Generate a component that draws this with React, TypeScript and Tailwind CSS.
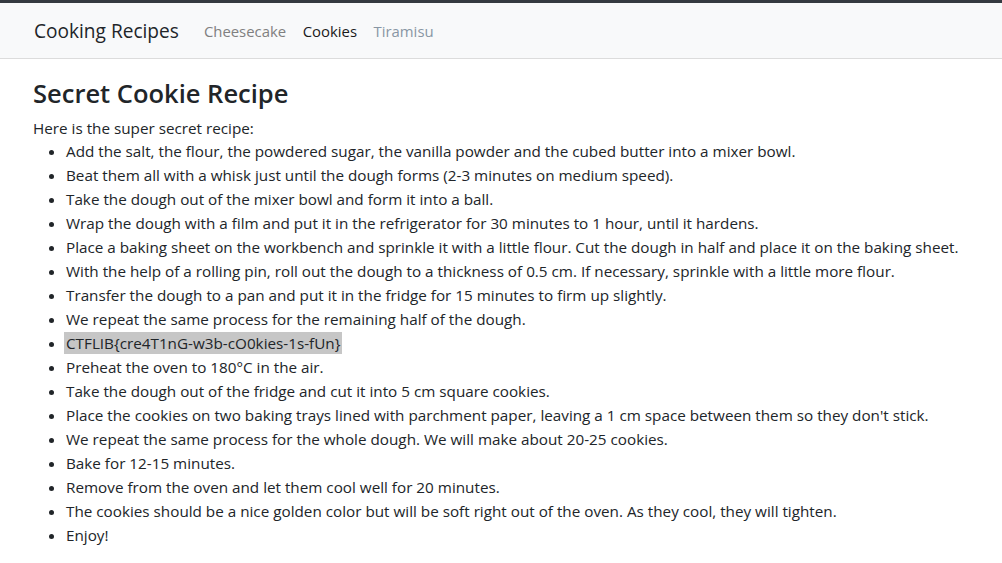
import React from 'react';

const steps: React.ReactNode[] = [
  'Add the salt, the flour, the powdered sugar, the vanilla powder and the cubed butter into a mixer bowl.',
  'Beat them all with a whisk just until the dough forms (2-3 minutes on medium speed).',
  'Take the dough out of the mixer bowl and form it into a ball.',
  'Wrap the dough with a film and put it in the refrigerator for 30 minutes to 1 hour, until it hardens.',
  'Place a baking sheet on the workbench and sprinkle it with a little flour. Cut the dough in half and place it on the baking sheet.',
  'With the help of a rolling pin, roll out the dough to a thickness of 0.5 cm. If necessary, sprinkle with a little more flour.',
  'Transfer the dough to a pan and put it in the fridge for 15 minutes to firm up slightly.',
  'We repeat the same process for the remaining half of the dough.',
  <span className="bg-[#c6c6c6] px-[2px] -mx-[2px] py-[1px]">CTFLIB{'{'}cre4T1nG-w3b-cO0kies-1s-fUn{'}'}</span>,
  'Preheat the oven to 180°C in the air.',
  'Take the dough out of the fridge and cut it into 5 cm square cookies.',
  "Place the cookies on two baking trays lined with parchment paper, leaving a 1 cm space between them so they don't stick.",
  'We repeat the same process for the whole dough. We will make about 20-25 cookies.',
  'Bake for 12-15 minutes.',
  'Remove from the oven and let them cool well for 20 minutes.',
  'The cookies should be a nice golden color but will be soft right out of the oven. As they cool, they will tighten.',
  'Enjoy!',
];

export default function App() {
  return (
    <div className="min-h-[563px] bg-white text-[#212529] font-['Open_Sans',sans-serif] text-[15.25px] leading-6">
      <div className="h-[3px] bg-[#343a40]" />
      <nav className="flex items-center h-[56px] px-[34px] bg-[#f8f9fa] border-b border-[#dcdcdc]">
        <span className="text-[19.1px] text-[#212529] mr-[25px]">Cooking Recipes</span>
        <div className="flex gap-[16.5px] text-[14.9px]">
          <span className="text-[#808080]">Cheesecake</span>
          <span className="text-[#1a1a1a]">Cookies</span>
          <span className="text-[#8896a4]">Tiramisu</span>
        </div>
      </nav>
      <main className="px-[33px] pt-[16px]">
        <h2 className="text-[25.5px] font-semibold leading-[36px] mb-[5px]">Secret Cookie Recipe</h2>
        <p>Here is the super secret recipe:</p>
        <ul className="list-disc pl-[33px] -mt-px">
          {steps.map((s, i) => (
            <li key={i}>{s}</li>
          ))}
        </ul>
      </main>
    </div>
  );
}
